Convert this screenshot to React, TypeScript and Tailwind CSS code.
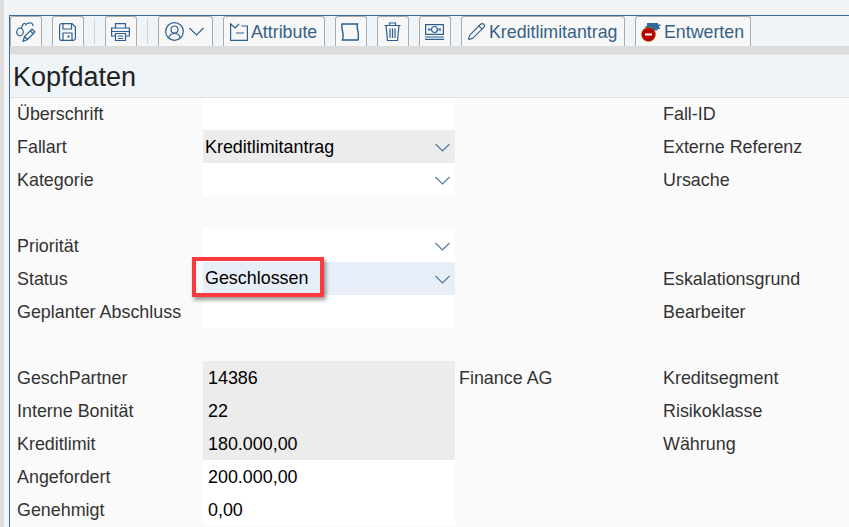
import type { ReactNode } from 'react'
import { Pencil } from 'lucide-react'

const blue = '#2a5f8f'

function ToolButton({ className, children }: { className: string; children: ReactNode }) {
  return (
    <div
      className={`flex h-[30px] items-center rounded-t-[3px] border border-b-0 border-[#ababab] bg-[#f7f7f7] text-[#346187] ${className}`}
    >
      {children}
    </div>
  )
}

function Divider() {
  return <div className="mx-[10px] mt-[3px] h-[25px] w-px bg-[#cfd2d5]" />
}

function Chevron({ color = '#4a78a4' }: { color?: string }) {
  return (
    <svg width="15" height="9" viewBox="0 0 15 9" fill="none" stroke={color} strokeWidth="1.1">
      <path d="M.5 1l7 7 7-7" />
    </svg>
  )
}

function GlassesPencilIcon() {
  return (
    <svg width="20" height="20" viewBox="0 0 20 20" fill="none" stroke={blue} strokeWidth="1.2">
      <ellipse cx="4" cy="10" rx="3.300" ry="3.800" />
      <path d="M5.500 6.500C6 3.500 7.500 1.200 9.500 1.500M9.500 3.500c.5-2 3.500-3 5.500-2.500 1.500.3 2 1.500 2 3" />
      <path d="M7 19.500l1.500-5 7.500-7.500 3 3-7.500 7.500-4.500 2zM8.500 14.500l3 3M14 8.500l3 3" />
    </svg>
  )
}

function SaveIcon() {
  return (
    <svg width="17" height="18" viewBox="0 0 17 18" fill="none" stroke={blue} strokeWidth="1.2">
      <path d="M2.500.6h10.500l3.400 3.400v11a2.400 2.400 0 0 1-2.400 2.400H2.500A2 2 0 0 1 .6 15.400V2.500A2 2 0 0 1 2.500.6z" />
      <path d="M4 .6v5.400h8.500V.6M4 17.400v-7.400h9v7.400" />
      <path d="M8.500 12.500h2v2h-2z" fill={blue} stroke="none" />
    </svg>
  )
}

function PrintIcon() {
  return (
    <svg width="19" height="18" viewBox="0 0 19 18" fill="none" stroke={blue} strokeWidth="1.2">
      <path d="M4.500 5V.6h10V5M4.500 13H.6V5h17.800v8h-3.900" />
      <path d="M.6 8.500h17.800M4.500 10.500h10v7h-10zM7 13h5M7 15.500h5" />
    </svg>
  )
}

function PersonIcon() {
  return (
    <svg width="19" height="19" viewBox="0 0 19 19" fill="none" stroke={blue} strokeWidth="1.200">
      <circle cx="9.500" cy="9.500" r="8.800" />
      <circle cx="9.500" cy="7.500" r="3.500" />
      <path d="M3.800 16c.6-3 2.700-4.500 5.700-4.500s5.100 1.500 5.700 4.500" />
    </svg>
  )
}

function AttributeIcon() {
  return (
    <svg width="18" height="18" viewBox="0 0 18 18" fill="none" stroke={blue} strokeWidth="1.2">
      <path d="M.6 0v17.400h16.800V3h-6M.6 1l4.500 4 4-4M6 10h8" />
    </svg>
  )
}

function PageIcon() {
  return (
    <svg width="18" height="18" viewBox="0 0 18 18" fill="none" stroke={blue} strokeWidth="1.4">
      <path d="M1 1h15.500c-.8 2.500-.3 4.500.4 7s.6 5.500.1 9H1.500c.8-3 .8-5.500.2-8S.4 3.500 1 1z" />
    </svg>
  )
}

function TrashIcon() {
  return (
    <svg width="17" height="19" viewBox="0 0 17 19" fill="none" stroke={blue} strokeWidth="1.2">
      <path d="M.5 3.500h16M5.500 3.500V1h6v2.500M2 3.500l1.500 15h10l1.500-15M6 6.500v9.500M8.500 6.500v9.500M11 6.500v9.500" />
    </svg>
  )
}

function MoneyIcon() {
  return (
    <svg width="19" height="16" viewBox="0 0 19 16" fill="none" stroke={blue} strokeWidth="1.200">
      <path d="M.6.6h17.800v9.800H.6zM0 13h19M0 15.400h19" />
      <circle cx="9.500" cy="5.500" r="3" />
      <path d="M3 5.500h2.500M13.500 5.500H16" strokeWidth="1.800" />
    </svg>
  )
}

function CancelIcon() {
  return (
    <svg width="20" height="20" viewBox="0 0 20 20">
      <path d="M3 5l3-1V1h11v1.500h2.500V4H18v1.500h1V7h-2.500v1.500H12L9 7.500z" fill="#336a9b" />
      <circle cx="7.500" cy="12.500" r="7" fill="#b90000" stroke="#a8790c" strokeWidth="0.6" />
      <rect x="4" y="11.500" width="7" height="2" fill="#ffffff" />
    </svg>
  )
}

type Cell = 'white' | 'gray' | 'blue' | 'none'

const cellBg: Record<Cell, string> = {
  white: 'bg-white',
  gray: 'bg-[#ececec]',
  blue: 'bg-[#e7eef7]',
  none: '',
}

function Field({ tone = 'white', value, select, inset, raised }: { tone?: Cell; value?: string; select?: boolean; inset?: boolean; raised?: boolean }) {
  return (
    <div className={`flex h-full items-center justify-between pr-[5px] text-black ${inset ? 'pl-[5px]' : 'pl-[2px]'} ${cellBg[tone]}`}>
      <span className={raised ? '' : 'pt-[2px]'}>{value}</span>
      {select && (
        <span className="mt-[2px] flex">
          <Chevron />
        </span>
      )}
    </div>
  )
}

type Row = {
  label?: string
  tone?: Cell
  value?: string
  select?: boolean
  inset?: boolean
  raised?: boolean
  extra?: string
  right?: string
}

const rows: Row[] = [
  { label: 'Überschrift', right: 'Fall-ID' },
  { label: 'Fallart', tone: 'gray', value: 'Kreditlimitantrag', select: true, right: 'Externe Referenz' },
  { label: 'Kategorie', select: true, right: 'Ursache' },
  { tone: 'none' },
  { label: 'Priorität', select: true },
  { label: 'Status', tone: 'blue', value: 'Geschlossen', select: true, raised: true, right: 'Eskalationsgrund' },
  { label: 'Geplanter Abschluss', right: 'Bearbeiter' },
  { tone: 'none' },
  { label: 'GeschPartner', tone: 'gray', value: '14386', inset: true, extra: 'Finance AG', right: 'Kreditsegment' },
  { label: 'Interne Bonität', tone: 'gray', value: '22', inset: true, right: 'Risikoklasse' },
  { label: 'Kreditlimit', tone: 'gray', value: '180.000,00', inset: true, right: 'Währung' },
  { label: 'Angefordert', value: '200.000,00', inset: true },
  { label: 'Genehmigt', value: '0,00', inset: true },
]

export default function App() {
  return (
    <div className="relative flex h-[527px] w-[849px] overflow-hidden bg-[#eff4f9] font-['Liberation_Sans',Arial,sans-serif] text-[17.9px] leading-[33px]">
      <div className="w-[4px] shrink-0 bg-[#dedede]" />
      <div className="w-[5px] shrink-0 bg-[#f3f5f8]" />
      <div className="mt-[15px] flex min-w-0 flex-1 flex-col border-l border-t border-[#3f6a8f]">
        <div className="flex h-[30px] shrink-0 text-[17.8px] leading-none">
          <ToolButton className="w-[32px] pl-[5px]"><GlassesPencilIcon /></ToolButton>
          <ToolButton className="ml-[10px] w-[32px] pl-[6px]"><SaveIcon /></ToolButton>
          <Divider />
          <ToolButton className="w-[32px] pl-[5px]"><PrintIcon /></ToolButton>
          <Divider />
          <ToolButton className="w-[55px] gap-[5px] pl-[6px]">
            <PersonIcon />
            <Chevron color={blue} />
          </ToolButton>
          <ToolButton className="ml-[10px] w-[102px] gap-[3px] pl-[6px]">
            <AttributeIcon />
            <span className="pt-[2px]">Attribute</span>
          </ToolButton>
          <ToolButton className="ml-[10px] w-[32px] pl-[5px]"><PageIcon /></ToolButton>
          <ToolButton className="ml-[10px] w-[32px] pl-[6px]"><TrashIcon /></ToolButton>
          <ToolButton className="ml-[10px] w-[32px] pl-[5px]"><MoneyIcon /></ToolButton>
          <ToolButton className="ml-[10px] w-[164px] gap-[3px] pl-[5px]">
            <Pencil size={19} strokeWidth={1.4} />
            <span className="pt-[2px]">Kreditlimitantrag</span>
          </ToolButton>
          <ToolButton className="ml-[10px] w-[116px] gap-[3px] pl-[5px]">
            <CancelIcon />
            <span className="pt-[2px]">Entwerten</span>
          </ToolButton>
        </div>
        <div className="h-[8px] shrink-0 bg-[#dcdcdc]" />
        <div className="h-[44px] shrink-0 border-b border-t border-b-[#e0e3e6] border-t-[#e4e8ec] pl-[3px] pt-[3px] text-[27px] leading-[39px] text-[#222222]">
          Kopfdaten
        </div>
        <div className="flex-1 bg-[#fafafa]">
          <div className="grid grid-cols-[193px_252px_204px_1fr] grid-rows-[32px] auto-rows-[33px]">
            {rows.map((row, i) => {
              const shift = i === 0 ? '' : 'pt-[1px]'
              return (
                <div key={i} className="contents">
                  <div className={`pl-[7px] text-[#333333] ${shift}`}>{row.label}</div>
                  <Field tone={row.tone} value={row.value} select={row.select} inset={row.inset} raised={row.raised} />
                  <div className={`pl-[4px] text-[#333333] ${shift}`}>{row.extra}</div>
                  <div className={`pl-[4px] text-[#333333] ${shift}`}>{row.right}</div>
                </div>
              )
            })}
          </div>
        </div>
      </div>
      <div className="absolute left-[192px] top-[257px] h-[40px] w-[132px] border-[4px] border-[#f93a3f] shadow-[2px_3px_4px_rgba(0,0,0,0.4)]" />
    </div>
  )
}
